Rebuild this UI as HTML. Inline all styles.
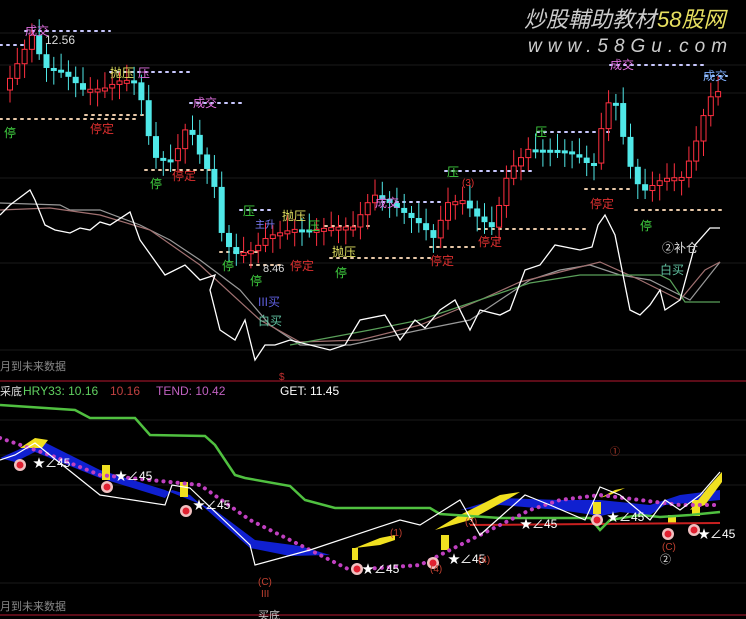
<!DOCTYPE html>
<html><head><meta charset="utf-8"><style>
html,body{margin:0;padding:0;background:#000;}
body{width:746px;height:619px;overflow:hidden;position:relative;font-family:"Liberation Sans","Noto Sans CJK SC",sans-serif;}
svg{position:absolute;left:0;top:0}
text{font-family:"Liberation Sans","Noto Sans CJK SC",sans-serif;}
</style></head><body>
<svg id="s" width="746" height="619" viewBox="0 0 746 619">
<rect width="746" height="619" fill="#000"/>
<g stroke="#0d0d0d" stroke-width="2">
<line x1="0" y1="33" x2="746" y2="33"/><line x1="0" y1="65" x2="746" y2="65"/><line x1="0" y1="93" x2="746" y2="93"/>
<line x1="0" y1="178" x2="746" y2="178"/><line x1="0" y1="263" x2="746" y2="263"/><line x1="0" y1="350" x2="746" y2="350"/>
<line x1="0" y1="420" x2="746" y2="420"/><line x1="0" y1="455" x2="746" y2="455"/><line x1="0" y1="485" x2="746" y2="485"/><line x1="0" y1="583" x2="746" y2="583"/>
</g>
<line x1="0" y1="381" x2="746" y2="381" stroke="#7a1020" stroke-width="1.5"/>
<line x1="0" y1="615" x2="746" y2="615" stroke="#7a1020" stroke-width="1.5"/>

<text x="524" y="27" font-size="22" font-style="italic" fill="#ccc" font-family="'Noto Sans CJK SC',sans-serif">炒股輔助教材</text>
<text x="657" y="27" font-size="22" font-style="italic" fill="#e8e060" font-family="'Noto Sans CJK SC',sans-serif">58股网</text>
<text x="528" y="52" font-size="19" font-style="italic" fill="#ccc" letter-spacing="6" font-family="Liberation Serif,serif">www.58Gu.com</text>

<g stroke-width="2" stroke-dasharray="2,5" stroke-linecap="round">
<line x1="0" y1="45" x2="25" y2="45" stroke="#c8c8ff"/>
<line x1="25" y1="31" x2="110" y2="31" stroke="#c8c8ff"/>
<line x1="110" y1="72" x2="190" y2="72" stroke="#c8c8ff"/>
<line x1="190" y1="103" x2="243" y2="103" stroke="#c8c8ff"/>
<line x1="0" y1="119" x2="140" y2="119" stroke="#e8c8a8"/>
<line x1="85" y1="115" x2="145" y2="115" stroke="#e8c8a8"/>
<line x1="145" y1="170" x2="215" y2="170" stroke="#e8c8a8"/>
<line x1="240" y1="210" x2="275" y2="210" stroke="#c8c8ff"/>
<line x1="220" y1="252" x2="260" y2="252" stroke="#e8c8a8"/>
<line x1="250" y1="265" x2="280" y2="265" stroke="#e8c8a8"/>
<line x1="325" y1="226" x2="373" y2="226" stroke="#e8c8a8"/>
<line x1="330" y1="258" x2="430" y2="258" stroke="#e8c8a8"/>
<line x1="375" y1="202" x2="445" y2="202" stroke="#c8c8ff"/>
<line x1="445" y1="171" x2="535" y2="171" stroke="#c8c8ff"/>
<line x1="478" y1="229" x2="590" y2="229" stroke="#e8c8a8"/>
<line x1="430" y1="247" x2="475" y2="247" stroke="#e8c8a8"/>
<line x1="537" y1="132" x2="610" y2="132" stroke="#c8c8ff"/>
<line x1="585" y1="189" x2="630" y2="189" stroke="#e8c8a8"/>
<line x1="610" y1="65" x2="705" y2="65" stroke="#c8c8ff"/>
<line x1="635" y1="210" x2="725" y2="210" stroke="#e8c8a8"/>
<line x1="705" y1="76" x2="727" y2="76" stroke="#a0c8ff"/>
</g>

<g id="candles"></g>

<polyline fill="none" stroke="#999" stroke-width="1.2" points="0,203 60,205 70,210 100,210 140,225 170,240 200,260 240,290 270,325 300,345 350,345 420,330 470,320 500,300 530,280 560,270 590,265 620,275 650,280 690,300 720,262"/>
<polyline fill="none" stroke="#a07070" stroke-width="1.2" points="0,210 50,208 100,215 150,230 200,265 260,320 300,342 360,340 420,325 480,300 520,282 560,272 600,262 640,280 680,300 705,270 720,262"/>
<polyline fill="none" stroke="#5aa05a" stroke-width="1.2" points="290,345 370,330 420,320 530,283 580,275 660,275 670,280 685,302 720,302"/>
<polyline fill="none" stroke="#fff" stroke-width="1.3" points="0,215 10,205 30,190 35,200 45,225 55,230 70,233 80,228 90,230 100,222 110,225 130,212 140,240 165,275 185,265 200,280 215,275 210,290 220,330 235,340 245,320 255,360 265,345 275,345 290,340 330,350 345,345 360,320 385,315 400,340 415,320 425,328 440,310 455,300 470,330 480,310 500,315 510,310 525,270 540,265 555,245 580,250 592,247 598,225 605,215 615,235 630,310 640,315 650,305 660,290 665,310 680,300 695,245 710,228 720,228"/>

<g font-size="12">
<text x="25" y="35" fill="#e070e0">成交</text><text x="45" y="44" fill="#ddd">12.56</text>
<text x="110" y="77" fill="#e0e060">抛压</text><text x="138" y="77" fill="#e070e0">压</text>
<text x="193" y="107" fill="#e070e0">成交</text>
<text x="4" y="137" fill="#40d040">停</text>
<text x="90" y="133" fill="#e03030">停定</text>
<text x="150" y="188" fill="#40d040">停</text>
<text x="172" y="180" fill="#e03030">停定</text>
<text x="243" y="215" fill="#40d040">压</text><text x="282" y="220" fill="#e0e060">抛压</text>
<text x="255" y="228" fill="#8080ff" font-size="10">主升</text>
<text x="222" y="270" fill="#40d040">停</text>
<text x="250" y="285" fill="#40d040">停</text><text x="263" y="272" fill="#ddd" font-size="11">8.46</text>
<text x="290" y="270" fill="#e03030">停定</text>
<text x="308" y="230" fill="#40d040">压</text>
<text x="332" y="256" fill="#e0e060">抛压</text>
<text x="335" y="277" fill="#40d040">停</text>
<text x="375" y="207" fill="#e070e0">成交</text>
<text x="430" y="265" fill="#e03030">停定</text>
<text x="478" y="246" fill="#e03030">停定</text>
<text x="447" y="176" fill="#40d040">压</text>
<text x="462" y="186" fill="#e03030" font-size="10">(3)</text>
<text x="535" y="136" fill="#40d040">压</text>
<text x="590" y="208" fill="#e03030">停定</text>
<text x="640" y="230" fill="#40d040">停</text>
<text x="610" y="69" fill="#e070e0">成交</text>
<text x="703" y="80" fill="#80b0ff">成交</text>
<text x="662" y="252" fill="#ddd">②补仓</text>
<text x="660" y="274" fill="#60c0a0">白买</text>
<text x="258" y="306" fill="#6060e0">III买</text>
<text x="258" y="325" fill="#60c0a0">白买</text>
<text x="0" y="370" fill="#888" font-size="11">月到未来数据</text>
<text x="279" y="380" fill="#c03030" font-size="10">$</text>
</g>

<g font-size="12">
<text x="0" y="395" fill="#ddd" font-size="11">采底</text>
<text x="23" y="395" fill="#60d060">HRY33: 10.16</text>
<text x="110" y="395" fill="#c04040">10.16</text>
<text x="156" y="395" fill="#c060c0">TEND: 10.42</text>
<text x="280" y="395" fill="#fff">GET: 11.45</text>
</g>

<polygon fill="#1020d0" points="0,458 15,462 35,452 100,478 165,498 172,490 190,495 250,548 290,556 330,555 300,546 255,540 215,510 190,500 165,490 100,470 40,440"/>
<polygon fill="#1020d0" points="460,510 500,505 560,510 600,516 620,512 650,515 665,505 700,502 720,500 720,490 680,495 650,505 600,500 560,500 500,498"/>
<g fill="#f0e020">
<polygon points="20,448 35,438 48,440 42,448"/>
<polygon points="355,548 380,538 395,535 395,540 380,545"/>
<polygon points="435,530 460,515 500,495 520,492 510,498 470,520"/>
<polygon points="600,498 615,490 625,488 610,495"/>
<polygon points="690,510 710,485 722,472 722,482 705,505"/>
<rect x="102" y="465" width="8" height="15"/><rect x="180" y="482" width="8" height="15"/>
<rect x="352" y="548" width="6" height="12"/><rect x="441" y="535" width="8" height="15"/>
<rect x="593" y="502" width="8" height="12"/><rect x="668" y="515" width="8" height="8"/><rect x="692" y="500" width="8" height="16"/>
</g>
<line x1="470" y1="525" x2="720" y2="523" stroke="#c82020" stroke-width="2"/>
<polyline fill="none" stroke="#50c040" stroke-width="2.5" points="0,405 75,410 90,418 135,418 150,435 205,436 215,445 235,475 245,478 290,486 305,500 335,508 430,508 440,514 500,518 590,518 600,530 610,520 640,515 660,517 690,515 720,512"/>
<polyline fill="none" stroke="#c040c0" stroke-width="4" stroke-dasharray="0.1,7" stroke-linecap="round" points="0,438 50,455 100,475 200,485 250,520 300,545 350,570 420,565 470,540 530,510 560,500 600,495 640,500 680,505 720,505"/>
<polyline fill="none" stroke="#fff" stroke-width="1.2" points="0,460 15,455 35,443 100,495 165,505 172,485 190,488 250,545 255,565 310,550 400,520 420,525 460,500 480,535 525,495 550,505 585,520 600,487 620,495 650,520 665,500 680,510 700,495 720,472"/>
<g id="marks"></g>
<g font-size="10" fill="#c04030">
<text x="610" y="455">①</text><text x="258" y="585">(C)</text><text x="261" y="597">III</text>
<text x="430" y="572">(4)</text><text x="478" y="563">(4)</text><text x="465" y="525">(3)</text><text x="390" y="536">(1)</text><text x="662" y="550">(C)</text>
</g>
<text x="660" y="563" font-size="11" fill="#ddd">②</text>
<text x="0" y="610" fill="#888" font-size="11">月到未来数据</text>
<text x="258" y="619" fill="#ccc" font-size="11">买底</text>
</svg>
<script>
(function(){
var ns="http://www.w3.org/2000/svg";
function el(p,t,a){var e=document.createElementNS(ns,t);for(var k in a)e.setAttribute(k,a[k]);p.appendChild(e);return e;}
var g=document.getElementById('candles');
var key=[[5,90],[30,45],[40,80],[60,85],[80,100],[100,95],[120,80],[135,80],[150,150],[170,150],[185,110],[200,150],[210,165],[218,220],[230,245],[250,245],[265,235],[290,235],[310,240],[350,240],[370,205],[385,210],[420,225],[430,235],[445,195],[460,190],[475,205],[490,215],[505,160],[525,140],[545,145],[560,150],[575,160],[590,175],[600,130],[610,100],[618,140],[630,190],[640,205],[660,190],[680,185],[695,140],[705,100],[715,90]];
function yAt(x){for(var i=0;i<key.length-1;i++){if(x>=key[i][0]&&x<=key[i+1][0]){var t=(x-key[i][0])/(key[i+1][0]-key[i][0]);return key[i][1]+t*(key[i+1][1]-key[i][1]);}}return 90;}
var prev=yAt(5);
for(var x=7;x<=718;x+=7.3){var c=yAt(x)+((Math.sin(x*1.7)*13));var up=c<prev;var ty=Math.min(c,prev),by=Math.max(c,prev);if(by-ty<3)by=ty+3;
var col=up?'#ff3040':'#50e8e8';
el(g,'line',{x1:x+3,x2:x+3,y1:ty-6-Math.abs(Math.sin(x))*10,y2:by+5+Math.abs(Math.cos(x))*10,stroke:col,'stroke-width':1});
el(g,'rect',up?{x:x+0.5,y:ty,width:5,height:by-ty,fill:'#000',stroke:col,'stroke-width':1}:{x:x,y:ty,width:6,height:by-ty,fill:col});
prev=c;}
var m=document.getElementById('marks');
[[20,465],[107,487],[186,511],[357,569],[433,563],[597,520],[668,534],[694,530]].forEach(function(p){el(m,'circle',{cx:p[0],cy:p[1],r:6,fill:'#f0c0c0'});el(m,'circle',{cx:p[0],cy:p[1],r:3.5,fill:'#e02030'});});
[[33,467,'★∠45'],[115,480,'★∠45'],[193,509,'★∠45'],[362,573,'★∠45'],[448,563,'★∠45'],[520,528,'★∠45'],[607,521,'★∠45'],[698,538,'★∠45']].forEach(function(p){var t=el(m,'text',{x:p[0],y:p[1],fill:'#fff','font-size':12});t.textContent=p[2];});
})();
</script>
</body></html>
